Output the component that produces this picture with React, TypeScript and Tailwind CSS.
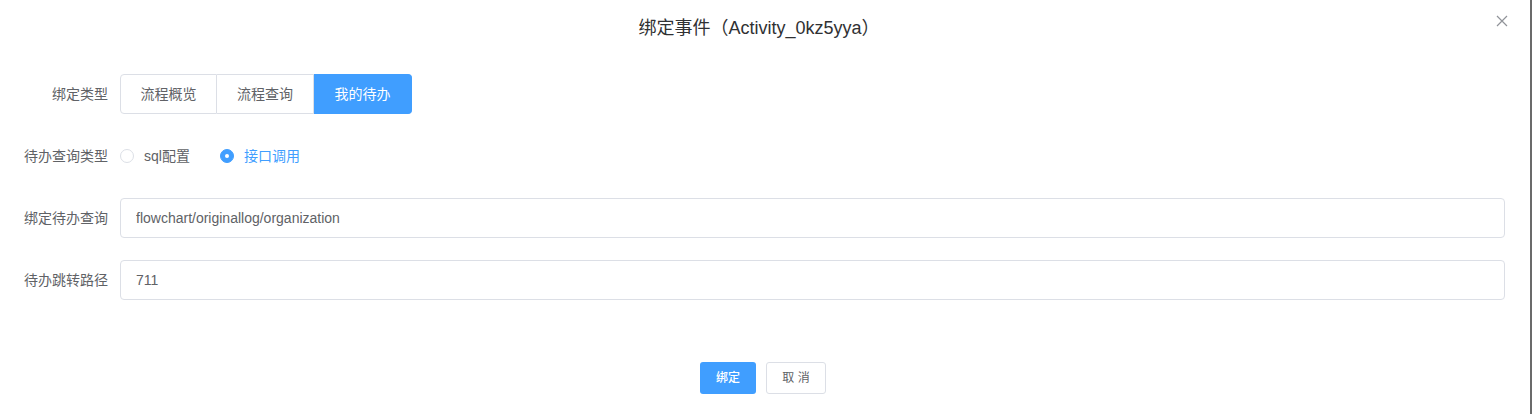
import React, { useState } from 'react'

const font = { fontFamily: '"Liberation Sans", "Noto Sans CJK SC", sans-serif' }

const bindTypes = ['流程概览', '流程查询', '我的待办']

const FormRow = ({ label, children, last }: { label: string; children: React.ReactNode; last?: boolean }) => (
  <div className={`flex items-center h-10 ${last ? '' : 'mb-[22px]'}`}>
    <label className="w-[120px] shrink-0 pr-3 text-right text-sm text-[#606266]">{label}</label>
    <div className="flex-1 flex items-center">{children}</div>
  </div>
)

const Radio = ({ label, checked, onClick }: { label: string; checked: boolean; onClick: () => void }) => (
  <span className="flex items-center mr-[30px] cursor-pointer" onClick={onClick}>
    <span
      className={`w-[14px] h-[14px] rounded-full border flex items-center justify-center ${
        checked ? 'bg-[#409eff] border-[#409eff]' : 'bg-white border-[#dcdfe6]'
      }`}
    >
      {checked && <span className="w-1 h-1 rounded-full bg-white" />}
    </span>
    <span className={`ml-[10px] text-sm ${checked ? 'text-[#409eff]' : 'text-[#606266]'}`}>{label}</span>
  </span>
)

export default function App() {
  const [bindType, setBindType] = useState(2)
  const [queryType, setQueryType] = useState('api')

  return (
    <div className="flex w-full h-[414px] bg-white" style={font}>
      <div className="relative flex-1 flex flex-col">
        {/* header */}
        <div className="pt-4 pb-[10px] pr-3 text-center text-lg leading-6 text-[#303133]">
          绑定事件（Activity_0kz5yya）
        </div>
        <button className="absolute top-[15px] right-[22px] text-[#909399]">
          <svg width="12" height="12" viewBox="0 0 12 12" fill="none">
            <path d="M1 1L11 11M11 1L1 11" stroke="currentColor" strokeWidth="1.2" />
          </svg>
        </button>

        {/* body */}
        <div className="pt-6 pr-[25px]">
          <FormRow label="绑定类型">
            <div className="flex">
              {bindTypes.map((t, i) => (
                <button
                  key={t}
                  onClick={() => setBindType(i)}
                  className={`h-10 text-sm border ${i === 0 ? 'w-[97px] rounded-l' : 'border-l-0'} ${
                    i === 1 ? 'w-[97px]' : ''
                  } ${i === bindTypes.length - 1 ? 'w-[98px] rounded-r' : ''} ${
                    bindType === i
                      ? 'bg-[#409eff] border-[#409eff] text-white'
                      : 'bg-white border-[#dcdfe6] text-[#606266]'
                  }`}
                >
                  {t}
                </button>
              ))}
            </div>
          </FormRow>
          <FormRow label="待办查询类型">
            <Radio label="sql配置" checked={queryType === 'sql'} onClick={() => setQueryType('sql')} />
            <Radio label="接口调用" checked={queryType === 'api'} onClick={() => setQueryType('api')} />
          </FormRow>
          <FormRow label="绑定待办查询">
            <input
              className="w-full h-10 px-[15px] text-sm text-[#606266] border border-[#dcdfe6] rounded outline-none"
              defaultValue="flowchart/originallog/organization"
            />
          </FormRow>
          <FormRow label="待办跳转路径" last>
            <input
              className="w-full h-10 px-[15px] text-sm text-[#606266] border border-[#dcdfe6] rounded outline-none"
              defaultValue="711"
            />
          </FormRow>
        </div>

        {/* footer */}
        <div className="mt-[62px] flex justify-center gap-[10px] pr-1">
          <button className="w-[56px] h-8 rounded-[3px] bg-[#409eff] text-white text-xs font-medium">绑定</button>
          <button className="w-[60px] h-8 rounded-[3px] border border-[#dcdfe6] bg-white text-[#606266] text-xs">
            取 消
          </button>
        </div>
      </div>
      <div className="w-[2px] bg-[#6b6b6b]" />
    </div>
  )
}
